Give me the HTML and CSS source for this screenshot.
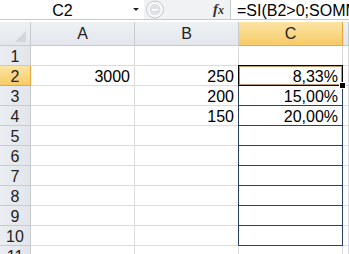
FILE: index.html
```html
<!DOCTYPE html>
<html lang="fr">
<head>
    <meta charset="UTF-8">
    <title>Feuil1</title>
    <link rel="stylesheet" href="styles.css">
</head>
<body>

    <!-- Formula bar -->
    <div class="formula-bar">
        <div class="name-box">
            <span class="name">C2</span>
            <span class="drop"></span>
        </div>
        <div class="bar-mid">
            <svg class="knob" width="20" height="19" viewBox="0 0 20 19">
                <circle cx="10" cy="9.5" r="8.5" fill="#f6f7f8" stroke="#c4c7cb"/>
                <circle cx="10" cy="9.5" r="5.5" fill="#dde1e6"/>
                <rect x="7" y="9" width="6" height="1.5" fill="#ffffff"/>
            </svg>
            <span class="fx">f<span class="x">x</span></span>
        </div>
        <div class="formula">=SI(B2&gt;0;SOMME($B$2:$B$4)/B2;0)</div>
    </div>

    <!-- Sheet grid -->
    <div class="grid">
        <div class="hd corner"><span class="tri"></span></div>
        <div class="hd">A</div>
        <div class="hd">B</div>
        <div class="hd hd-sel">C</div>
        <div class="hd"></div>

        <div class="rh">1</div><div class="cell"></div><div class="cell"></div><div class="cell"></div><div class="cell"></div>
        <div class="rh rh-sel">2</div><div class="cell">3000</div><div class="cell">250</div><div class="cell active">8,33%</div><div class="cell"></div>
        <div class="rh">3</div><div class="cell"></div><div class="cell">200</div><div class="cell sel">15,00%</div><div class="cell"></div>
        <div class="rh">4</div><div class="cell"></div><div class="cell">150</div><div class="cell sel">20,00%</div><div class="cell"></div>
        <div class="rh">5</div><div class="cell"></div><div class="cell"></div><div class="cell sel"></div><div class="cell"></div>
        <div class="rh">6</div><div class="cell"></div><div class="cell"></div><div class="cell sel"></div><div class="cell"></div>
        <div class="rh">7</div><div class="cell"></div><div class="cell"></div><div class="cell sel"></div><div class="cell"></div>
        <div class="rh">8</div><div class="cell"></div><div class="cell"></div><div class="cell sel"></div><div class="cell"></div>
        <div class="rh">9</div><div class="cell"></div><div class="cell"></div><div class="cell sel"></div><div class="cell"></div>
        <div class="rh">10</div><div class="cell"></div><div class="cell"></div><div class="cell sel"></div><div class="cell"></div>
        <div class="rh">11</div><div class="cell"></div><div class="cell"></div><div class="cell"></div><div class="cell"></div>
    </div>

</body>
</html>
```

FILE: styles.css
```css
body {
    margin: 0;
    padding: 0;
    overflow: hidden;
    background-color: white;
    font-family: 'Liberation Sans', Arial, sans-serif;
    font-size: 16px;
    color: #000;
}
.formula-bar {
    display: flex;
    height: 19px;
    border-bottom: 1px solid #c5c9ce;
    margin-bottom: 2px;
}
.name-box {
    display: flex;
    align-items: center;
    width: 144px;
    background-color: white;
}
.name {
    width: 125px;
    text-align: center;
    line-height: 19px;
    padding-top: 1px;
}
.drop {
    margin-left: 8px;
    width: 0;
    height: 0;
    border-left: 3px solid transparent;
    border-right: 3px solid transparent;
    border-top: 3px solid #222;
}
.bar-mid {
    display: flex;
    align-items: center;
    width: 86px;
    background-color: #f1f2f3;
    border-right: 1px solid #c5c9ce;
}
.knob {
    margin-left: 1px;
}
.fx {
    margin-left: 48px;
    font-family: 'Liberation Serif', 'Times New Roman', serif;
    font-style: italic;
    font-weight: bold;
    font-size: 15px;
    color: #333;
}
.fx .x {
    font-size: 12px;
}
.formula {
    flex: 1;
    padding-left: 6px;
    line-height: 19px;
    padding-top: 1px;
    white-space: nowrap;
    overflow: hidden;
}
.grid {
    display: grid;
    grid-template-columns: 31px 104px 104px 104px 1fr;
    grid-template-rows: 24px repeat(11, 20px);
}
.grid > div {
    box-sizing: border-box;
    border-right: 1px solid #dadcdd;
    border-bottom: 1px solid #dadcdd;
}
.hd {
    background: linear-gradient(#eef1f4, #e3e7ec);
    border-color: #c6cbd1 !important;
    text-align: center;
    line-height: 23px;
    color: #222;
}
.corner {
    position: relative;
}
.tri {
    position: absolute;
    right: 4px;
    bottom: 3px;
    width: 0;
    height: 0;
    border-left: 11px solid transparent;
    border-bottom: 11px solid #d3d6da;
}
.hd-sel {
    background: linear-gradient(#fce4a4, #f7cb67);
    border-color: #e9a640 !important;
}
.rh {
    background: linear-gradient(90deg, #eaedf1, #e2e6eb);
    border-color: #c6cbd1 !important;
    text-align: center;
    line-height: 18px;
    padding-top: 2px;
    color: #222;
}
.rh-sel {
    background: linear-gradient(#fce4a4, #f7cb67);
    border-color: #e9a640 !important;
}
.cell {
    text-align: right;
    padding-right: 4px;
    line-height: 18px;
    padding-top: 2px;
    white-space: nowrap;
}
.sel {
    border-color: #24406b !important;
    box-shadow: -1px 0 0 #24406b;
}
.active {
    position: relative;
    border-color: #24406b !important;
}
.active::after {
    content: '';
    position: absolute;
    left: -1px;
    top: -1px;
    right: -1px;
    bottom: -1px;
    border: 1px solid #000;
    box-shadow: inset 0 0 0 1px #c49a66;
}
.active::before {
    content: '';
    position: absolute;
    right: -4px;
    bottom: -4px;
    width: 5px;
    height: 5px;
    background-color: #000;
    border: 1px solid #fff;
    z-index: 2;
}
```
